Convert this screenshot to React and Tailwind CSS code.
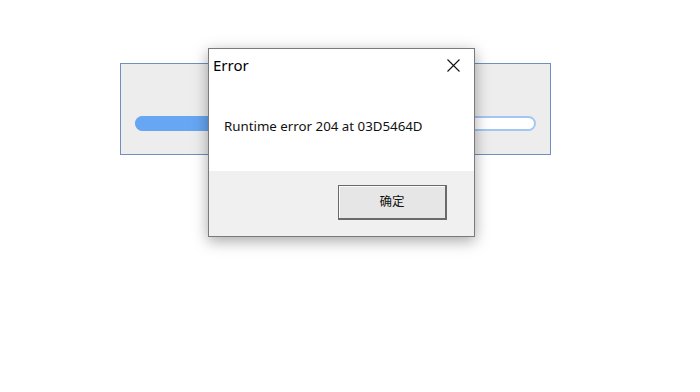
import React from "react";

export default function App() {
  return (
    <div className="relative h-[392px] w-[700px] overflow-hidden bg-white" style={{ fontFamily: '"Noto Sans", "Noto Sans CJK SC", sans-serif' }}>
      {/* background progress window */}
      <div className="ml-[120px] mt-[63px] flex h-[92px] w-[431px] items-center border border-[#6f8fbf] bg-[#ededed] pl-[14px] pt-[29px]">
        <div className="relative h-[15px] w-[401px] rounded-full border-2 border-[#a3c7f4] bg-white">
          <div className="absolute -inset-[2px] right-[60px] rounded-full bg-[#66a6f2]" />
        </div>
      </div>

      {/* error dialog */}
      <div className="absolute left-[208px] top-[48px] flex h-[189px] w-[267px] flex-col border border-[#7a7a7a] bg-white shadow-[0_4px_14px_rgba(0,0,0,0.35)]">
        <div className="flex h-[32px] items-center justify-between pl-[4px] pr-[14px]">
          <span className="text-[15px] leading-none text-black">Error</span>
          <svg width="13" height="13" viewBox="0 0 13 13" className="mt-[1px]">
            <path d="M0.5 0.5 L12.5 12.5 M12.5 0.5 L0.5 12.5" stroke="#111" strokeWidth="1.1" />
          </svg>
        </div>
        <div className="flex h-[90px] items-center pl-[15px] pt-[1px]">
          <span className="text-[13.3px] text-[#111]">Runtime error 204 at 03D5464D</span>
        </div>
        <div className="flex flex-1 items-start justify-end bg-[#f0f0f0] pr-[27px] pt-[14px]">
          <button className="flex h-[35px] w-[109px] items-center justify-center border border-b-2 border-r-2 border-[#6a6a6a] bg-[#e6e6e6] text-[12.5px] text-[#111] shadow-[inset_1px_1px_0_#fafafa]">
            确定
          </button>
        </div>
      </div>
    </div>
  );
}
